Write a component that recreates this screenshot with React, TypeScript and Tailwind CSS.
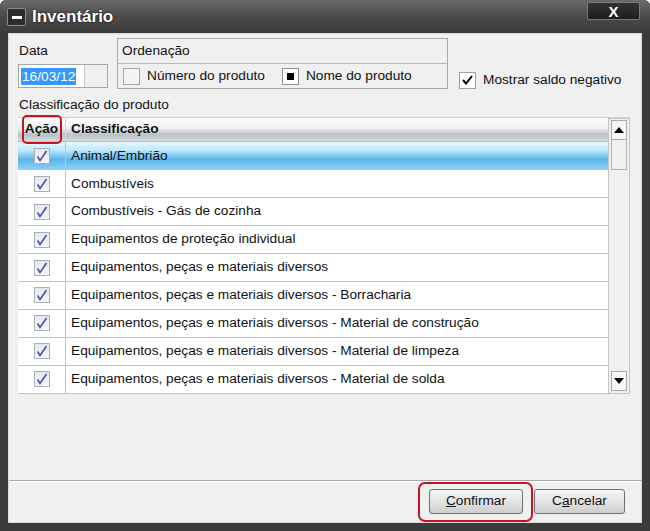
import React from 'react';

const rows = [
  'Animal/Embrião',
  'Combustíveis',
  'Combustíveis - Gás de cozinha',
  'Equipamentos de proteção individual',
  'Equipamentos, peças e materiais diversos',
  'Equipamentos, peças e materiais diversos - Borracharia',
  'Equipamentos, peças e materiais diversos - Material de construção',
  'Equipamentos, peças e materiais diversos - Material de limpeza',
  'Equipamentos, peças e materiais diversos - Material de solda',
];

function CheckMark() {
  return (
    <div className="w-[16px] h-[16px] border border-[#a9b0bc] bg-gradient-to-b from-[#e4e8ee] to-[#f6f7f9] flex items-center justify-center">
      <svg width="12" height="12" viewBox="0 0 12 12">
        <path d="M1.5 6.5 L4 10.5 L10.5 1" stroke="#4a4fa8" strokeWidth="1.6" fill="none" />
      </svg>
    </div>
  );
}

export default function App() {
  return (
    <div
      className="w-[650px] h-[531px] bg-[#3b3b3b] rounded-t-[6px] flex flex-col text-[13.7px] text-[#111]"
      style={{ fontFamily: '"Liberation Sans", Arial, sans-serif' }}
    >
      {/* Title bar */}
      <div className="h-[33px] flex items-start bg-gradient-to-b from-[#6b6b6b] via-[#4a4a4a] to-[#3b3b3b] rounded-t-[6px] relative">
        <div className="mt-[8px] ml-[7px] w-[19px] h-[18px] bg-[#2c2c2c] border border-[#8a8a8a] rounded-[2px] flex items-center justify-center">
          <div className="w-[10px] h-[3px] bg-white" />
        </div>
        <div className="ml-[6px] mt-[6px] text-white font-bold text-[17px] leading-[22px] [text-shadow:0_0_2px_#000]">
          Inventário
        </div>
        <div className="absolute right-[10px] top-[2px] w-[53px] h-[18px] bg-gradient-to-b from-[#333] to-[#1e1e1e] border border-[#7a7a7a] rounded-[2px] flex items-center justify-center text-white font-bold text-[15px] leading-none">
          X
        </div>
      </div>

      {/* Client */}
      <div className="flex-1 mx-[8px] mb-[8px] bg-[#f0f0f0] border border-[#d8d8d8] flex flex-col">
        <div className="flex-1 flex flex-col pl-[9px] pr-[13px] pt-[4px]">
          {/* Top row */}
          <div className="flex items-start">
            <div className="w-[90px] flex flex-col">
              <div className="h-[26px] flex items-center pl-[1px]">Data</div>
              <div className="h-[24px] border border-[#a7a7a7] bg-white flex">
                <div className="flex-1 flex items-center pl-[2px]">
                  <span className="bg-[#3399ff] text-white px-[1px] leading-[17px]">16/03/12</span>
                </div>
                <div className="w-[23px] border-l border-[#c4c4c4] bg-[#f0f0f0]" />
              </div>
            </div>
            <div className="ml-[9px] w-[331px] h-[51px] border border-[#a9a9a9] flex flex-col">
              <div className="h-[25px] flex items-center pl-[4px] border-b border-[#b8b8b8]">Ordenação</div>
              <div className="flex-1 flex items-center pl-[5px]">
                <div className="w-[17px] h-[17px] border border-[#a7a7a7] bg-[#f4f4f4]" />
                <span className="ml-[7px]">Número do produto</span>
                <div className="ml-[17px] w-[17px] h-[17px] border border-[#8d8d8d] bg-white flex items-center justify-center">
                  <div className="w-[7px] h-[7px] bg-black" />
                </div>
                <span className="ml-[7px]">Nome do produto</span>
              </div>
            </div>
            <div className="ml-[11px] mt-[32px] flex items-center">
              <div className="w-[17px] h-[17px] border border-[#a0a0a0] bg-white flex items-center justify-center">
                <svg width="11" height="10" viewBox="0 0 11 10">
                  <path d="M1 5 L4 8.5 L10 1" stroke="#000" strokeWidth="2" fill="none" />
                </svg>
              </div>
              <span className="ml-[7px]">Mostrar saldo negativo</span>
            </div>
          </div>

          <div className="mt-[6px] h-[16px] leading-[16px] pl-[1px]">Classificação do produto</div>

          {/* Table */}
          <div className="mt-[4px] w-[612px] h-[277px] border-t border-[#d0d0d0] bg-white flex">
            <div className="flex-1 flex flex-col">
              <div className="h-[25px] flex font-bold bg-[linear-gradient(to_bottom,#fcfcfc_0%,#eef0f1_45%,#bac2c6_72%,#d4d8da_100%)] border-b border-[#c8c0c0] relative">
                <div className="w-[48px] flex items-center justify-center border-r border-[#d6d6d6]">Ação</div>
                <div className="flex-1 flex items-center pl-[5px]">Classificação</div>
                <div className="absolute left-[4px] top-[-3px] w-[40px] h-[29px] border-2 border-[#c8121c] rounded-[5px]" />
              </div>
              {rows.map((r, i) => (
                <div
                  key={r}
                  className={`h-[28px] flex border-b ${
                    i === 0
                      ? 'bg-[linear-gradient(to_bottom,#e6f8ff_0%,#bfe9fb_30%,#5ab5e8_65%,#8ccff3_100%)] border-[#c9bdbd]'
                      : 'border-[#c4c4c4]'
                  }`}
                >
                  <div className="w-[48px] flex items-center justify-center border-r border-[#c4c4c4]">
                    <CheckMark />
                  </div>
                  <div className="flex-1 flex items-center pl-[5px] whitespace-nowrap">{r}</div>
                </div>
              ))}
            </div>
            {/* Scrollbar */}
            <div className="w-[22px] border border-[#c4c4c4] bg-[#f0f0f0] flex flex-col items-center pt-[1px] pb-[2px]">
              <div className="w-[16px] h-[20px] border border-[#a9a9a9] bg-[#f6f6f6] flex items-center justify-center">
                <svg width="10" height="6" viewBox="0 0 10 6"><path d="M0 6 L5 0 L10 6 Z" fill="#000" /></svg>
              </div>
              <div className="w-[16px] h-[30px] border border-[#b4b4b4] border-t-0 bg-[#f0f0f0]" />
              <div className="flex-1" />
              <div className="w-[16px] h-[20px] border border-[#a9a9a9] bg-[#f6f6f6] flex items-center justify-center">
                <svg width="10" height="6" viewBox="0 0 10 6"><path d="M0 0 L10 0 L5 6 Z" fill="#000" /></svg>
              </div>
            </div>
          </div>
          <div className="flex-1" />
        </div>

        {/* Buttons */}
        <div className="h-[42px] border-t border-[#a8a8a8] shadow-[inset_0_1px_0_#ffffff] flex items-center justify-end pr-[16px] gap-[11px]">
          <div className="relative">
            <div className="w-[94px] h-[25px] border border-[#707070] rounded-[3px] bg-gradient-to-b from-[#f6f6f6] via-[#e4e4e4] to-[#cdcdcd] flex items-center justify-center">
              <span><u>C</u>onfirmar</span>
            </div>
            <div className="absolute left-[-11px] top-[-7px] w-[115px] h-[40px] border-2 border-[#c8121c] rounded-[7px]" />
          </div>
          <div className="w-[91px] h-[25px] border border-[#707070] rounded-[3px] bg-gradient-to-b from-[#f6f6f6] via-[#e4e4e4] to-[#cdcdcd] flex items-center justify-center">
            <span>C<u>a</u>ncelar</span>
          </div>
        </div>
      </div>
    </div>
  );
}
